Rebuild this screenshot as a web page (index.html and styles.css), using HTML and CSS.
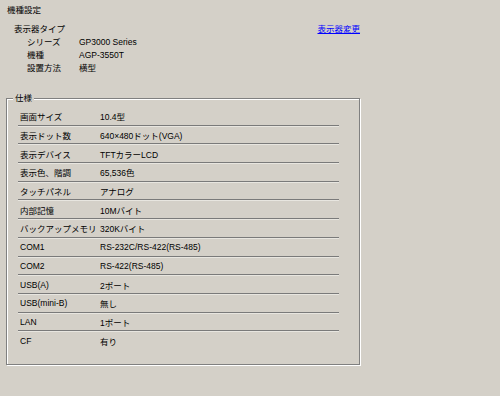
FILE: index.html
```html
<!DOCTYPE html>
<html lang="ja">
<head>
    <meta charset="UTF-8">
    <title>機種設定</title>
    <link rel="stylesheet" href="styles.css">
</head>
<body>
    <div class="page">
        <div class="title">機種設定</div>

        <div class="model">
            <div class="model-head">
                <span>表示器タイプ</span>
                <a href="#" class="change-link">表示器変更</a>
            </div>
            <div class="model-row"><span class="model-label">シリーズ</span><span>GP3000 Series</span></div>
            <div class="model-row"><span class="model-label">機種</span><span>AGP-3550T</span></div>
            <div class="model-row"><span class="model-label">設置方法</span><span>横型</span></div>
        </div>

        <div class="spec">
            <span class="spec-legend">仕様</span>
            <div class="spec-row"><span class="spec-label">画面サイズ</span><span>10.4型</span></div>
            <div class="spec-row"><span class="spec-label">表示ドット数</span><span>640×480ドット(VGA)</span></div>
            <div class="spec-row"><span class="spec-label">表示デバイス</span><span>TFTカラーLCD</span></div>
            <div class="spec-row"><span class="spec-label">表示色、階調</span><span>65,536色</span></div>
            <div class="spec-row"><span class="spec-label">タッチパネル</span><span>アナログ</span></div>
            <div class="spec-row"><span class="spec-label">内部記憶</span><span>10Mバイト</span></div>
            <div class="spec-row"><span class="spec-label">バックアップメモリ</span><span>320Kバイト</span></div>
            <div class="spec-row"><span class="spec-label">COM1</span><span>RS-232C/RS-422(RS-485)</span></div>
            <div class="spec-row"><span class="spec-label">COM2</span><span>RS-422(RS-485)</span></div>
            <div class="spec-row"><span class="spec-label">USB(A)</span><span>2ポート</span></div>
            <div class="spec-row"><span class="spec-label">USB(mini-B)</span><span>無し</span></div>
            <div class="spec-row"><span class="spec-label">LAN</span><span>1ポート</span></div>
            <div class="spec-row"><span class="spec-label">CF</span><span>有り</span></div>
        </div>
    </div>
</body>
</html>
```

FILE: styles.css
```css
html, body {
    margin: 0;
    padding: 0;
    background-color: #d4d0c8;
}

body {
    font-family: 'Liberation Sans', 'Noto Sans CJK JP', sans-serif;
    font-size: 8.5px;
    color: #000;
}

.page {
    width: 500px;
    height: 396px;
    padding: 4px 0 0 6px;
    box-sizing: border-box;
}

.title {
    height: 13px;
    line-height: 13px;
    margin-left: 1px;
}

.model {
    margin-top: 6px;
    margin-left: 8px;
}

.model-head {
    display: flex;
    justify-content: space-between;
    width: 346px;
    height: 13px;
    line-height: 13px;
}

.change-link {
    color: #0000ff;
    text-decoration: underline;
}

.model-row {
    display: flex;
    height: 13px;
    line-height: 13px;
    padding-left: 13px;
}

.model-label {
    width: 52px;
}

.spec {
    position: relative;
    width: 354px;
    margin-top: 23px;
    padding: 8px 20px 14px 11px;
    box-sizing: border-box;
    border: 1px solid #808080;
    box-shadow: 1px 1px 0 #fff, inset 1px 1px 0 #fff;
}

.spec-legend {
    position: absolute;
    top: -7px;
    left: 6px;
    padding: 0 2px;
    line-height: 13px;
    background-color: #d4d0c8;
}

.spec-row {
    display: flex;
    align-items: center;
    height: 18.7px;
    padding-left: 2px;
    padding-top: 1px;
    box-sizing: border-box;
    border-bottom: 1px solid #7a7a7a;
    box-shadow: 0 1px 0 #e8e6e0;
}

.spec-row:last-child {
    border-bottom: none;
    box-shadow: none;
}

.spec-label {
    width: 80px;
}
```
